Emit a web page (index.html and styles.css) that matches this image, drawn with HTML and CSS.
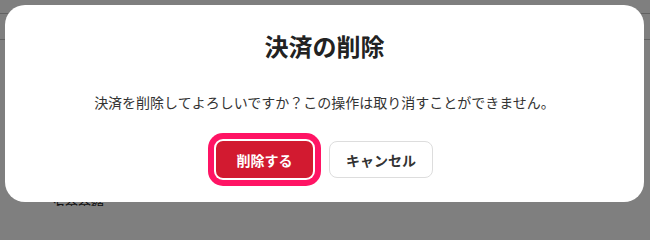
FILE: index.html
```html
<!DOCTYPE html>
<html lang="ja">
<head>
<meta charset="utf-8">
<title>決済の削除</title>
<link rel="stylesheet" href="styles.css">
</head>
<body>
<div class="page">
  <div class="page-top"></div>
  <div class="page-bar"></div>
  <div class="page-body">
    <div class="page-label">返金金額</div>
  </div>
</div>
<div class="overlay">
  <div class="modal" role="dialog" aria-labelledby="modal-title">
    <h2 class="modal-title" id="modal-title">決済の削除</h2>
    <p class="modal-message">決済を削除してよろしいですか？この操作は取り消すことができません。</p>
    <div class="modal-actions">
      <button class="btn btn-danger" type="button">削除する</button>
      <button class="btn btn-secondary" type="button">キャンセル</button>
    </div>
  </div>
</div>
</body>
</html>
```

FILE: styles.css
```css
* {
  box-sizing: border-box;
}

html, body {
  margin: 0;
  padding: 0;
  height: 206px;
  overflow: hidden;
}

body {
  font-family: "Noto Sans CJK JP", "Noto Sans", sans-serif;
  background: #ffffff;
  color: #333333;
}

.page {
  height: 206px;
  overflow: hidden;
}

.page-top {
  height: 14px;
  border-bottom: 1px solid #c4c4c4;
}

.page-bar {
  height: 26px;
  border-bottom: 1px solid #c4c4c4;
}

.page-body {
  padding: 157px 0 0 52px;
}

.page-label {
  font-size: 13px;
  line-height: 18px;
  color: #222222;
}

.overlay {
  position: fixed;
  inset: 0;
  background: rgba(0, 0, 0, 0.5);
  padding: 5px 0 0 5px;
}

.modal {
  width: 639px;
  background: #ffffff;
  border-radius: 20px;
  padding: 23px 24px 24px;
  text-align: center;
}

.modal-title {
  margin: 0;
  font-size: 24px;
  line-height: 36px;
  font-weight: 700;
  color: #222222;
}

.modal-message {
  margin: 28px 0 0;
  font-size: 14px;
  line-height: 21px;
  color: #333333;
}

.modal-actions {
  margin-top: 28px;
  display: flex;
  justify-content: center;
  gap: 16px;
}

.btn {
  height: 37px;
  border-radius: 7px;
  font-family: inherit;
  font-size: 14px;
  font-weight: 700;
  cursor: pointer;
  padding: 0;
}

.btn-danger {
  width: 97px;
  background: #d21a30;
  color: #ffffff;
  border: none;
  box-shadow: 0 0 0 2px #ffffff, 0 0 0 8px #ff1464;
}

.btn-secondary {
  width: 104px;
  background: #ffffff;
  color: #333333;
  border: 1px solid #dddddd;
  border-radius: 8px;
}
```
